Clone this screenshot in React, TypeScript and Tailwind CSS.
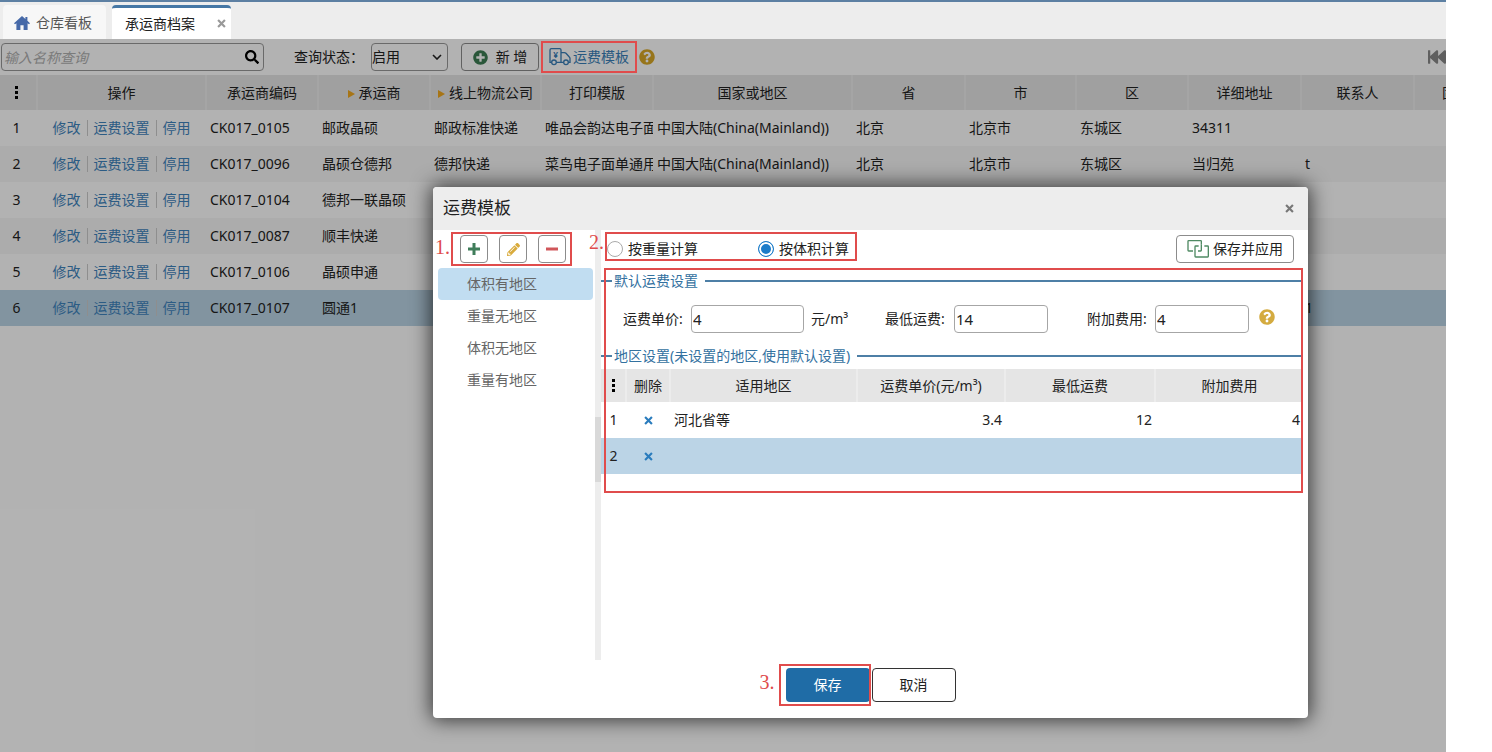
import { useState } from 'react'
import {
  FaFastBackward,
  FaPencilAlt,
  FaPlusCircle,
  FaQuestionCircle,
  FaSearch,
} from 'react-icons/fa'

interface Carrier {
  id: number
  code: string
  name: string
  company?: string
  print?: string
  country?: string
  province?: string
  city?: string
  district?: string
  address?: string
  contact?: string
}

const carriers: Carrier[] = [
  { id: 1, code: 'CK017_0105', name: '邮政晶硕', company: '邮政标准快递', print: '唯品会韵达电子面', country: '中国大陆(China(Mainland))', province: '北京', city: '北京市', district: '东城区', address: '34311' },
  { id: 2, code: 'CK017_0096', name: '晶硕仓德邦', company: '德邦快递', print: '菜鸟电子面单通用', country: '中国大陆(China(Mainland))', province: '北京', city: '北京市', district: '东城区', address: '当归苑', contact: 't' },
  { id: 3, code: 'CK017_0104', name: '德邦一联晶硕' },
  { id: 4, code: 'CK017_0087', name: '顺丰快递' },
  { id: 5, code: 'CK017_0106', name: '晶硕申通' },
  { id: 6, code: 'CK017_0107', name: '圆通1', contact: '1' },
]

const columns = [
  { title: '操作', width: 'w-[169px]' },
  { title: '承运商编码', width: 'w-[112px]' },
  { title: '承运商', width: 'w-[112px]', sort: true },
  { title: '线上物流公司', width: 'w-[111px]', sort: true },
  { title: '打印模版', width: 'w-[112px]' },
  { title: '国家或地区', width: 'w-[199px]' },
  { title: '省', width: 'w-[113px]' },
  { title: '市', width: 'w-[111px]' },
  { title: '区', width: 'w-[112px]' },
  { title: '详细地址', width: 'w-[113px]' },
  { title: '联系人', width: 'w-[113px]' },
  { title: '固定电话', width: 'w-[112px]' },
]

const templates = ['体积有地区', '重量无地区', '体积无地区', '重量有地区']

const regions = [
  { id: 1, area: '河北省等', price: '3.4', min: '12', extra: '4' },
  { id: 2, area: '', price: '', min: '', extra: '' },
]

const iconButton = 'flex size-7 items-center justify-center rounded border border-[#8c8c8c] bg-white'
const fieldInput = 'h-7 rounded border border-[#a6a6a6] bg-white pl-px text-[15px] text-[#222]'
const radio = 'size-4 appearance-none rounded-full border border-[#aaa] bg-white checked:border-[#1c7cc9] checked:bg-[#1c7cc9] checked:shadow-[inset_0_0_0_2px_#fff]'

function Dots() {
  return (
    <svg width="3" height="13" viewBox="0 0 3 13" className="mx-auto" aria-hidden="true">
      <rect width="3" height="3" y="0" />
      <rect width="3" height="3" y="5" />
      <rect width="3" height="3" y="10" />
    </svg>
  )
}

function HomeIcon() {
  return (
    <svg width="16" height="14" viewBox="0 0 16 14" fill="#4669a8" aria-hidden="true">
      <path d="M8 0L0 7.2 1 8.3l1.4-1.1V14h4V9.2h3.2V14h4V7.2L15 8.3l1-1.1-2.6-2.4V1h-2v2z" />
    </svg>
  )
}

function CloseIcon({ size }: { size: number }) {
  return (
    <svg width={size} height={size} viewBox="0 0 10 10" fill="none" stroke="currentColor" strokeWidth="2.4" aria-hidden="true">
      <path d="M1.2 1.2l7.6 7.6M8.8 1.2L1.2 8.8" />
    </svg>
  )
}

function TruckIcon() {
  return (
    <svg width="22" height="18" viewBox="0 0 66 54" fill="none" stroke="currentColor" strokeWidth="4" aria-hidden="true">
      <path d="M8 43H3V6q0-4 4-4h25q4 0 4 4v37H22" />
      <path d="M36 14h10q3 0 5 2l10 11q2 2 2 4v12h-5M44 43h-8" />
      <circle cx="15" cy="43" r="7" />
      <circle cx="51" cy="43" r="7" />
      <text x="20" y="31" textAnchor="middle" fontSize="25" fontWeight="700" fill="currentColor" stroke="none">¥</text>
    </svg>
  )
}

function ApplyIcon() {
  return (
    <svg width="22" height="18" viewBox="0 0 66 54" fill="none" stroke="#4f8a63" strokeWidth="4" aria-hidden="true">
      <path d="M18 33H5q-2 0-2-2V4q0-2 2-2h36q2 0 2 2v9" />
      <path d="M35 18H26q-2 0-2 2v29q0 2 2 2h36q2 0 2-2V20q0-2-2-2H52" />
      <path d="M43 13v18q0 2-2 2h-8" />
    </svg>
  )
}

// Red frame drawn above the mask
function Mark({ className }: { className: string }) {
  return <span className={`pointer-events-none absolute z-40 border-2 border-[#e04c4c] ${className}`} />
}

function Step({ n, className }: { n: number; className: string }) {
  return (
    <span className={`absolute z-40 font-['Liberation_Serif',serif] text-xl leading-5 text-[#e04c4c] ${className}`}>{n}.</span>
  )
}

function SectionTitle({ children }: { children: string }) {
  return (
    <h3 className="flex h-5 items-center text-[#33719f] before:mr-0.5 before:h-0.5 before:w-[11px] before:bg-[#4d7fa6] after:ml-[7px] after:h-0.5 after:flex-1 after:bg-[#4d7fa6]">
      {children}
    </h3>
  )
}

function TemplateDialog() {
  const [active, setActive] = useState(0)
  const [mode, setMode] = useState('volume')

  return (
    <div
      role="dialog"
      aria-labelledby="dialog-title"
      className="absolute left-[433px] top-[187px] z-30 flex h-[531px] w-[875px] flex-col rounded bg-white shadow-[0_0_20px_2px_rgba(0,0,0,0.7)]"
    >
      {/* Header */}
      <div className="flex h-[43px] items-center justify-between rounded-t bg-[#ededed] pl-[10px] pr-[14px]">
        <h2 id="dialog-title" className="text-[17px] text-[#222]">运费模板</h2>
        <button type="button" aria-label="关闭" className="text-[#777]">
          <CloseIcon size={9} />
        </button>
      </div>

      {/* Body */}
      <div className="flex flex-1">
        <div className="relative w-[162px] pt-[5px]">
          <Step n={1} className="left-0.5 top-[7px]" />
          <div className="relative ml-[27px] flex gap-[11px]">
            <button type="button" aria-label="新增模板" className={iconButton}>
              <svg width="12" height="12" viewBox="0 0 12 12" stroke="#3f7d5a" strokeWidth="3" aria-hidden="true">
                <path d="M0 6h12M6 0v12" />
              </svg>
            </button>
            <button type="button" aria-label="编辑模板" className={iconButton}>
              <FaPencilAlt size={13} color="#d9ab3c" />
            </button>
            <button type="button" aria-label="删除模板" className={iconButton}>
              <svg width="12" height="12" viewBox="0 0 12 12" stroke="#d0565a" strokeWidth="3" aria-hidden="true">
                <path d="M0 6h12" />
              </svg>
            </button>
            <Mark className="-inset-y-[3px] -left-[9px] right-[23px]" />
          </div>
          <ul className="ml-[5px] mr-0.5 mt-[5px]">
            {templates.map((name, i) => (
              <li key={name}>
                <button
                  type="button"
                  onClick={() => setActive(i)}
                  className={`h-8 w-full rounded-sm pl-[29px] text-left text-[#666] ${i === active ? 'bg-[#c1ddf1]' : ''}`}
                >
                  {name}
                </button>
              </li>
            ))}
          </ul>
        </div>

        {/* Splitter */}
        <div className="w-[6px] bg-[#ededed] pt-[187px]">
          <div className="h-[65px] bg-[#d9d9d9]" />
        </div>

        <div className="relative min-w-0 flex-1 pr-[5px] pt-[5px]">
          <Step n={2} className="-left-3 top-0.5" />
          <div className="flex items-center justify-between">
            <div className="relative ml-[6px] flex h-7 items-center gap-15 pr-2">
              <label className="flex items-center gap-[5px]">
                <input type="radio" name="mode" checked={mode === 'weight'} onChange={() => setMode('weight')} className={radio} />
                按重量计算
              </label>
              <label className="flex items-center gap-[5px]">
                <input type="radio" name="mode" checked={mode === 'volume'} onChange={() => setMode('volume')} className={radio} />
                按体积计算
              </label>
              <Mark className="-left-0.5 -top-[3px] bottom-0.5 right-0" />
            </div>
            <button type="button" className="mr-[9px] flex h-7 w-[118px] items-center justify-center gap-1 rounded border border-[#8c8c8c] bg-white">
              <ApplyIcon />
              保存并应用
            </button>
          </div>

          <div className="relative mt-[5px] pb-[19px] pt-[3px]">
            <Mark className="inset-y-0 left-[3px] right-0" />
            <SectionTitle>默认运费设置</SectionTitle>
            <div className="mb-[13px] mt-[14px] flex items-center pl-[22px]">
              <label htmlFor="price" className="w-[68px]">运费单价:</label>
              <input id="price" defaultValue="4" className={`${fieldInput} w-[113px]`} />
              <span className="ml-[7px] w-[74px]">元/m³</span>
              <label htmlFor="min" className="w-[69px]">最低运费:</label>
              <input id="min" defaultValue="14" className={`${fieldInput} w-[94px]`} />
              <label htmlFor="extra" className="ml-[39px] w-[68px]">附加费用:</label>
              <input id="extra" defaultValue="4" className={`${fieldInput} w-[94px]`} />
              <FaQuestionCircle size={16} color="#d4ab40" className="mb-1 ml-[10px]" />
            </div>
            <SectionTitle>地区设置(未设置的地区,使用默认设置)</SectionTitle>
            <table className="mt-[3px] w-full table-fixed">
              <thead>
                <tr className="h-[33px] bg-[#e5e5e5]">
                  <th className="w-[25px] border-r-2 border-[#ececec]"><Dots /></th>
                  <th className="w-[44px] border-r-2 border-[#ececec] font-normal">删除</th>
                  <th className="w-[187px] border-r-2 border-[#ececec] font-normal">适用地区</th>
                  <th className="w-[148px] border-r-2 border-[#ececec] font-normal">运费单价(元/m³)</th>
                  <th className="w-[150px] border-r-2 border-[#ececec] font-normal">最低运费</th>
                  <th className="font-normal">附加费用</th>
                </tr>
              </thead>
              <tbody>
                {regions.map((row) => (
                  <tr key={row.id} className={`h-9 ${row.id === 2 ? 'bg-[#bbd4e6]' : ''}`}>
                    <td className="text-center">{row.id}</td>
                    <td>
                      <button type="button" aria-label="删除" className="mx-auto block text-[#2a7cbd]">
                        <CloseIcon size={9} />
                      </button>
                    </td>
                    <td className="pl-1">{row.area}</td>
                    <td className="pr-[3px] text-right">{row.price}</td>
                    <td className="pr-[3px] text-right">{row.min}</td>
                    <td className="pr-[3px] text-right">{row.extra}</td>
                  </tr>
                ))}
              </tbody>
            </table>
          </div>
        </div>
      </div>

      {/* Footer */}
      <div className="flex justify-center gap-0.5 pb-4 pt-2">
        <div className="relative">
          <Step n={3} className="-left-[26px] top-1" />
          <Mark className="-inset-y-1 -left-[7px] -right-px" />
          <button type="button" className="h-[34px] w-[84px] rounded bg-[#1f6ca6] text-white">保存</button>
        </div>
        <button type="button" className="h-[34px] w-[84px] rounded border border-[#333] bg-white">取消</button>
      </div>
    </div>
  )
}

export default function App() {
  return (
    <div className="min-h-screen bg-white pr-[46px] font-['Noto_Sans','Noto_Sans_CJK_SC',sans-serif] text-sm text-[#222]">
      <div className="relative flex min-h-screen flex-col overflow-hidden">
        {/* Tabs */}
        <nav className="flex h-[39px] items-end gap-[6px] border-t-2 border-[#5d80a3] bg-[#ededed] pl-[3px]">
          <a href="#board" className="flex h-[34px] w-[103px] items-center gap-[6px] rounded-t-sm bg-[#f7f7f7] pl-[11px] pt-0.5 text-[#555]">
            <HomeIcon />
            仓库看板
          </a>
          <div className="flex h-[34px] w-[119px] items-center justify-between rounded-t border-t-[3px] border-[#4577a5] bg-white pl-[13px] pr-[5px]">
            <a href="#carrier">承运商档案</a>
            <button type="button" aria-label="关闭标签" className="text-[#999]">
              <CloseIcon size={9} />
            </button>
          </div>
        </nav>

        <main className="relative flex-1 bg-white">
          {/* Toolbar */}
          <div className="flex h-9 items-center pl-px">
            <div className="relative">
              <input
                aria-label="名称"
                placeholder="输入名称查询"
                className="h-7 w-[263px] rounded border border-[#999] bg-white pl-0.5 placeholder:italic placeholder:text-[#b0b0b0]"
              />
              <FaSearch size={14} className="absolute right-[5px] top-[7px] text-black" />
            </div>
            <label htmlFor="status" className="ml-[30px] w-[77px]">查询状态：</label>
            <div className="relative">
              <select id="status" className="h-7 w-[77px] appearance-none rounded border border-[#999] bg-white">
                <option>启用</option>
              </select>
              <svg width="10" height="6" viewBox="0 0 10 6" fill="none" stroke="#222" strokeWidth="1.6" className="pointer-events-none absolute right-[6px] top-[11px]">
                <path d="M1 1l4 4 4-4" />
              </svg>
            </div>
            <button type="button" className="ml-[13px] flex h-7 w-[78px] items-center justify-center gap-2 rounded border border-[#8c8c8c] bg-white">
              <FaPlusCircle size={15} color="#3d7d53" />
              新 增
            </button>
            <div className="relative ml-[10px]">
              <button type="button" className="flex h-7 items-center gap-0.5 text-[#3a7fb8]">
                <TruckIcon />
                运费模板
              </button>
              <Mark className="-inset-x-2 -inset-y-0.5" />
            </div>
            <FaQuestionCircle size={16} color="#d8a828" className="ml-[10px]" />
            <FaFastBackward size={18} color="#888" className="ml-auto shrink-0" />
          </div>

          {/* Carrier list */}
          <div className="overflow-hidden">
            <table className="w-[1526px] table-fixed">
              <thead>
                <tr className="h-[35px] bg-[#e5e5e5]">
                  <th className="w-[37px] border-r-2 border-[#ececec] pr-1"><Dots /></th>
                  {columns.map((col) => (
                    <th key={col.title} className={`border-r-2 border-[#ececec] font-normal whitespace-nowrap ${col.width}`}>
                      {col.sort && <span className="mr-1 inline-block border-y-4 border-l-[7px] border-y-transparent border-l-[#f0a820]" />}
                      {col.title}
                    </th>
                  ))}
                </tr>
              </thead>
              <tbody>
                {carriers.map((row) => (
                  <tr key={row.id} className={`h-9 ${row.id === 6 ? 'bg-[#bbd4e6]' : row.id % 2 === 0 ? 'bg-[#f6f6f6]' : 'bg-white'}`}>
                    <td className="pr-1 text-center">{row.id}</td>
                    <td>
                      <div className="flex items-center justify-center gap-[6px] text-[#3f84bd]">
                        <a href="#edit">修改</a>
                        <span className="h-4 w-px bg-[#ccc]" />
                        <a href="#freight">运费设置</a>
                        <span className="h-4 w-px bg-[#ccc]" />
                        <a href="#stop">停用</a>
                      </div>
                    </td>
                    {[row.code, row.name, row.company, row.print, row.country, row.province, row.city, row.district, row.address, row.contact, ''].map((text, i) => (
                      <td key={i} className="overflow-hidden pl-1 whitespace-nowrap">{text}</td>
                    ))}
                  </tr>
                ))}
              </tbody>
            </table>
          </div>

          {/* Mask */}
          <div className="absolute inset-0 z-10 bg-black/30" />
        </main>

        <TemplateDialog />
      </div>
    </div>
  )
}
